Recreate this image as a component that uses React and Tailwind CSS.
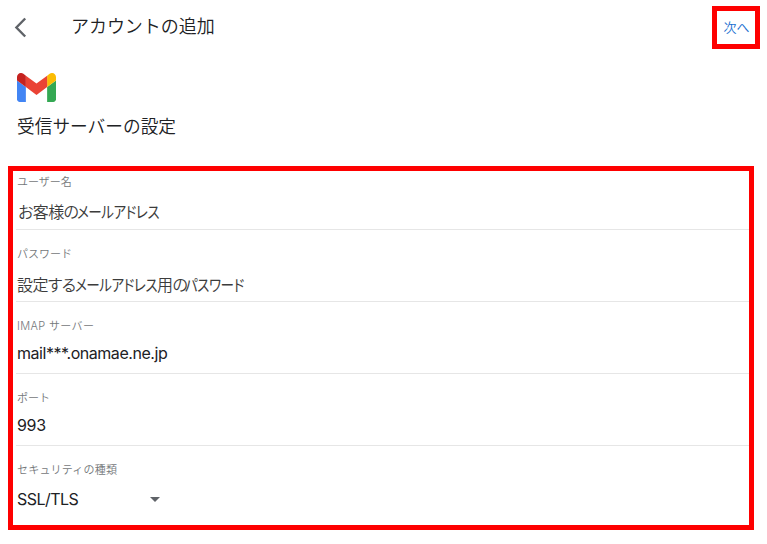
import React from 'react';

// katakana runs are set narrower than the kanji and hiragana around them
const Narrow = ({ width, children }) => (
    <span className={`inline-block origin-left scale-x-[0.85] font-normal ${width}`}>{children}</span>
);

const fields = [
    {
        id: 'user',
        label: 'ユーザー名',
        value: (
            <>
                <span className="inline-block w-[59px]">お客様の</span>
                <Narrow width="w-[81px]">メールアドレス</Narrow>
            </>
        ),
        rowClass: 'h-[59px] pt-[3px]',
        labelClass: '',
        valueClass: 'mt-[10px] pl-px text-[#3c3c3c] font-[350] [font-feature-settings:"palt"] tracking-[-0.6px]',
    },
    {
        id: 'password',
        label: 'パスワード',
        value: (
            <>
                <span className="inline-block w-[58px]">設定する</span>
                <Narrow width="w-[82px]">メールアドレス</Narrow>
                <span className="inline-block w-[28px]">用の</span>
                <Narrow width="w-[60px]">パスワード</Narrow>
            </>
        ),
        rowClass: 'h-[72px] pt-4',
        labelClass: '',
        valueClass: 'mt-[11px] text-[#3c3c3c] font-[350] [font-feature-settings:"palt"] tracking-[-0.6px]',
    },
    {
        id: 'imap',
        label: 'IMAP サーバー',
        value: 'mail***.onamae.ne.jp',
        rowClass: 'h-[72px] pt-4',
        labelClass: 'tracking-[0.35px]',
        valueClass: 'mt-[7px] text-[#202124] font-normal tracking-[-0.45px]',
    },
    {
        id: 'port',
        label: 'ポート',
        value: '993',
        rowClass: 'h-[72px] pt-4',
        labelClass: '',
        valueClass: 'mt-[7px] text-[#202124] font-normal tracking-[-0.3px]',
    },
];

function GmailLogo() {
    return (
        <svg className="block h-[29px] w-[39px]" viewBox="52 42 88 66" preserveAspectRatio="none">
            <path fill="#4285f4" d="M58 108h14V74L52 59v43c0 3.32 2.69 6 6 6" />
            <path fill="#34a853" d="M120 108h14c3.32 0 6-2.69 6-6V59l-20 15" />
            <path fill="#fbbc04" d="M120 48v26l20-15v-8c0-7.42-8.47-11.65-14.4-7.2" />
            <path fill="#ea4335" d="M72 74V48l24 18 24-18v26L96 92" />
            <path fill="#c5221f" d="M52 51v8l20 15V48l-5.6-4.2c-5.94-4.45-14.4-.22-14.4 7.2" />
        </svg>
    );
}

function Label({ children, className = '' }) {
    return <div className={`text-[11px] leading-4 font-[350] text-[#74777a] whitespace-nowrap ${className}`}>{children}</div>;
}

export default function App() {
    return (
        <div className="h-[544px] w-[767px] overflow-hidden bg-white font-['Inter','Noto_Sans_CJK_JP',sans-serif] text-[#202124]">
            <header className="flex h-[55px] items-start pl-[14px] pr-[7px] pt-[6px]">
                <button aria-label="戻る" className="mt-[11px]">
                    <svg width="13" height="21" viewBox="0 0 13 21" fill="none" stroke="#5f6368" strokeWidth="2.4">
                        <path d="M11.2 1.5L2.4 10.5l8.8 9" />
                    </svg>
                </button>
                <h1 className="ml-11 mt-[7px] whitespace-nowrap text-[18px] leading-7 font-[350] tracking-[-0.05px]">アカウントの追加</h1>
                <button className="ml-auto flex h-[43px] w-12 items-center justify-center border-5 border-[#fe0000] pl-px text-[13px] font-[350] text-[#1a6fd0]">
                    次へ
                </button>
            </header>

            <div className="pl-[17px] pt-[18px]">
                <GmailLogo />
                <h2 className="mt-[11px] whitespace-nowrap text-[17.7px] leading-7 font-[350]">受信サーバーの設定</h2>
            </div>

            <form className="ml-2 mt-[25px] h-[364px] w-[746px] border-5 border-[#fe0000] pl-[3px]">
                {fields.map(field => (
                    <div key={field.id} className={`border-b border-[#e6e6e6] pl-px ${field.rowClass}`}>
                        <Label className={field.labelClass}>{field.label}</Label>
                        <div className={`whitespace-nowrap text-[16px] leading-6 ${field.valueClass}`}>{field.value}</div>
                    </div>
                ))}
                <div className="pl-px pt-4">
                    <Label className="tracking-[0.2px]">セキュリティの種類</Label>
                    <div className="mt-[9px] flex w-[143px] items-center justify-between text-[16px] leading-6 font-normal">
                        <span className="tracking-[-0.55px]">SSL/TLS</span>
                        <svg width="10" height="5" viewBox="0 0 10 5" fill="#5f6368">
                            <path d="M0 0h10L5 5z" />
                        </svg>
                    </div>
                </div>
            </form>
        </div>
    );
}
